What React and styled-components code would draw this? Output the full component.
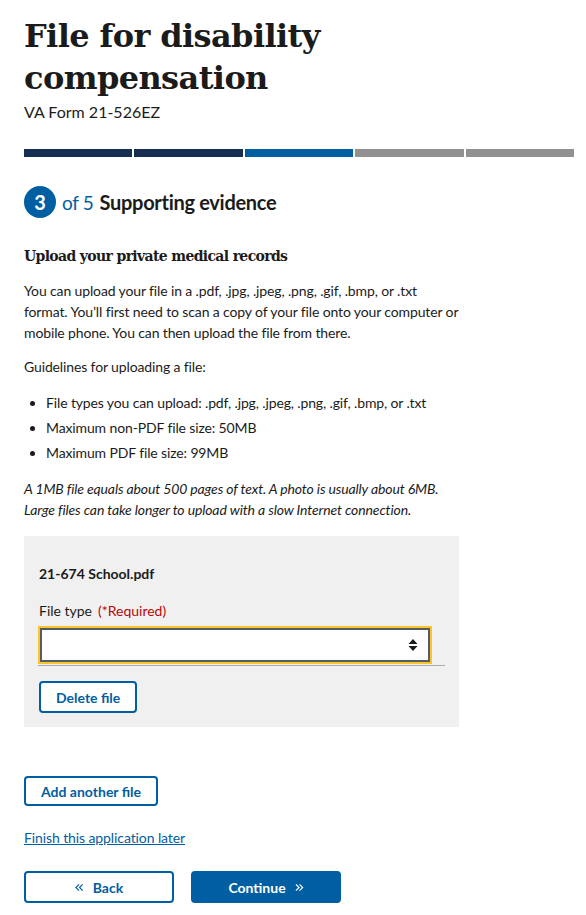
import React from "react";
import styled, { createGlobalStyle } from "styled-components";

const GlobalStyle = createGlobalStyle`
  body {
    margin: 0;
    background: #fff;
    color: #1b1b1b;
    font-family: Lato, "Open Sans", sans-serif;
  }
  * { box-sizing: border-box; }
`;

const Page = styled.main`
  padding: 0 12px 40px 24px;
`;

const Title = styled.h1`
  max-width: 400px;
  margin: 15px 0 0;
  font-family: "DejaVu Serif", serif;
  font-size: 32px;
  line-height: 42px;
  font-weight: 700;
  letter-spacing: -0.6px;
`;

const Subtitle = styled.div`
  margin-top: 3px;
  font-size: 16px;
  line-height: 20px;
`;

const Progress = styled.div`
  display: grid;
  grid-template-columns: repeat(5, 1fr);
  gap: 2px;
  margin-top: 27px;
`;

const Segment = styled.div`
  height: 8px;
  background: ${(p) => p.$color};
`;

const StepRow = styled.div`
  display: flex;
  align-items: center;
  margin-top: 29px;
  height: 32px;
`;

const StepCircle = styled.span`
  width: 32px;
  height: 32px;
  border-radius: 50%;
  background: #005ea2;
  color: #fff;
  display: flex;
  align-items: center;
  justify-content: center;
  font-size: 20px;
  font-weight: 700;
`;

const StepOf = styled.span`
  margin-left: 6px;
  font-size: 19px;
  letter-spacing: -0.3px;
  color: #005ea2;
`;

const StepTitle = styled.span`
  margin-left: 6px;
  font-size: 20px;
  letter-spacing: -0.3px;
  font-weight: 700;
`;

const SectionTitle = styled.h3`
  margin: 28px 0 0;
  font-family: "DejaVu Serif", serif;
  font-size: 14px;
  line-height: 20px;
  font-weight: 700;
  letter-spacing: -0.65px;
`;

const Text = styled.p`
  margin: ${(p) => p.$mt || 14}px 0 0;
  font-size: 14px;
  line-height: 21px;
  letter-spacing: -0.13px;
  font-style: ${(p) => (p.$italic ? "italic" : "normal")};
`;

const List = styled.ul`
  margin: 15px 0 0;
  padding-left: 22px;
  font-size: 14px;
  line-height: 21px;
  letter-spacing: -0.13px;

  li + li {
    margin-top: 4px;
  }
`;

const UploadBox = styled.section`
  width: 435px;
  margin-top: 16px;
  padding: 28px 14px 14px 15px;
  background: #f0f0f0;
`;

const FileName = styled.div`
  font-size: 14px;
  line-height: 20px;
  font-weight: 700;
`;

const Label = styled.div`
  margin-top: 17px;
  font-size: 14px;
  line-height: 20px;
`;

const Required = styled.span`
  margin-left: 6px;
  color: #b50909;
`;

const SelectWrap = styled.div`
  width: 407px;
  margin: 5px 0 0 -1px;
  padding: 2px 2px 3px;
  border-bottom: 1px solid #a9aeb1;
`;

const Select = styled.div`
  width: 390px;
  height: 34px;
  background: #fff;
  border: 2px solid #565c65;
  outline: 2px solid #fdc52a;
  display: flex;
  align-items: center;
  justify-content: flex-end;
  padding-right: 10px;
`;

const Button = styled.button`
  display: inline-flex;
  align-items: center;
  justify-content: center;
  gap: 9px;
  height: ${(p) => p.$h || 32}px;
  width: ${(p) => (p.$w ? `${p.$w}px` : "auto")};
  margin-top: ${(p) => p.$mt || 0}px;
  padding: 0 15px;
  border-radius: 4px;
  border: 2px solid #005ea2;
  background: ${(p) => (p.$primary ? "#005ea2" : "#fff")};
  color: ${(p) => (p.$primary ? "#fff" : "#005ea2")};
  font-family: Lato, sans-serif;
  font-size: 14px;
  font-weight: 700;
  cursor: pointer;
`;

const BlockButton = styled(Button)`
  display: flex;
`;

const Link = styled.a`
  display: block;
  width: fit-content;
  margin-top: 22px;
  font-size: 14px;
  line-height: 20px;
  letter-spacing: -0.1px;
  color: #005ea2;
  text-decoration: underline;
`;

const NavRow = styled.div`
  display: flex;
  gap: 17px;
  margin-top: 23px;
`;

function Chevrons({ dir }) {
  const d =
    dir === "left"
      ? ["M4.5 1 L1 4.5 L4.5 8", "M8.5 1 L5 4.5 L8.5 8"]
      : ["M1 1 L4.5 4.5 L1 8", "M5 1 L8.5 4.5 L5 8"];
  return (
    <svg width="9" height="9" viewBox="0 0 10 9" fill="none" stroke="currentColor" strokeWidth="1.3">
      <path d={d[0]} />
      <path d={d[1]} />
    </svg>
  );
}

function SortArrows() {
  return (
    <svg width="10" height="12" viewBox="0 0 10 12" fill="#1b1b1b">
      <path d="M5 0 L9.5 5 H0.5 Z" />
      <path d="M0.5 7 H9.5 L5 12 Z" />
    </svg>
  );
}

const segments = ["#162e51", "#162e51", "#005ea2", "#919191", "#919191"];

export default function App() {
  return (
    <>
      <GlobalStyle />
      <Page>
        <Title>File for disability compensation</Title>
        <Subtitle>VA Form 21-526EZ</Subtitle>

        <Progress>
          {segments.map((c, i) => (
            <Segment key={i} $color={c} />
          ))}
        </Progress>

        <StepRow>
          <StepCircle>3</StepCircle>
          <StepOf>of 5</StepOf>
          <StepTitle>Supporting evidence</StepTitle>
        </StepRow>

        <SectionTitle>Upload your private medical records</SectionTitle>
        <Text>
          You can upload your file in a .pdf, .jpg, .jpeg, .png, .gif, .bmp, or .txt
          <br />
          format. You’ll first need to scan a copy of your file onto your computer or
          <br />
          mobile phone. You can then upload the file from there.
        </Text>
        <Text $mt={13}>Guidelines for uploading a file:</Text>
        <List>
          <li>File types you can upload: .pdf, .jpg, .jpeg, .png, .gif, .bmp, or .txt</li>
          <li>Maximum non-PDF file size: 50MB</li>
          <li>Maximum PDF file size: 99MB</li>
        </List>
        <Text $mt={15} $italic>
          A 1MB file equals about 500 pages of text. A photo is usually about 6MB.
          <br />
          Large files can take longer to upload with a slow Internet connection.
        </Text>

        <UploadBox>
          <FileName>21-674 School.pdf</FileName>
          <Label>
            File type<Required>(*Required)</Required>
          </Label>
          <SelectWrap>
            <Select>
              <SortArrows />
            </Select>
          </SelectWrap>
          <Button $mt={15}>Delete file</Button>
        </UploadBox>

        <BlockButton $mt={49} $h={30}>Add another file</BlockButton>

        <Link href="#">Finish this application later</Link>

        <NavRow>
          <Button $w={150}>
            <Chevrons dir="left" />
            Back
          </Button>
          <Button $w={150} $primary>
            Continue
            <Chevrons dir="right" />
          </Button>
        </NavRow>
      </Page>
    </>
  );
}
